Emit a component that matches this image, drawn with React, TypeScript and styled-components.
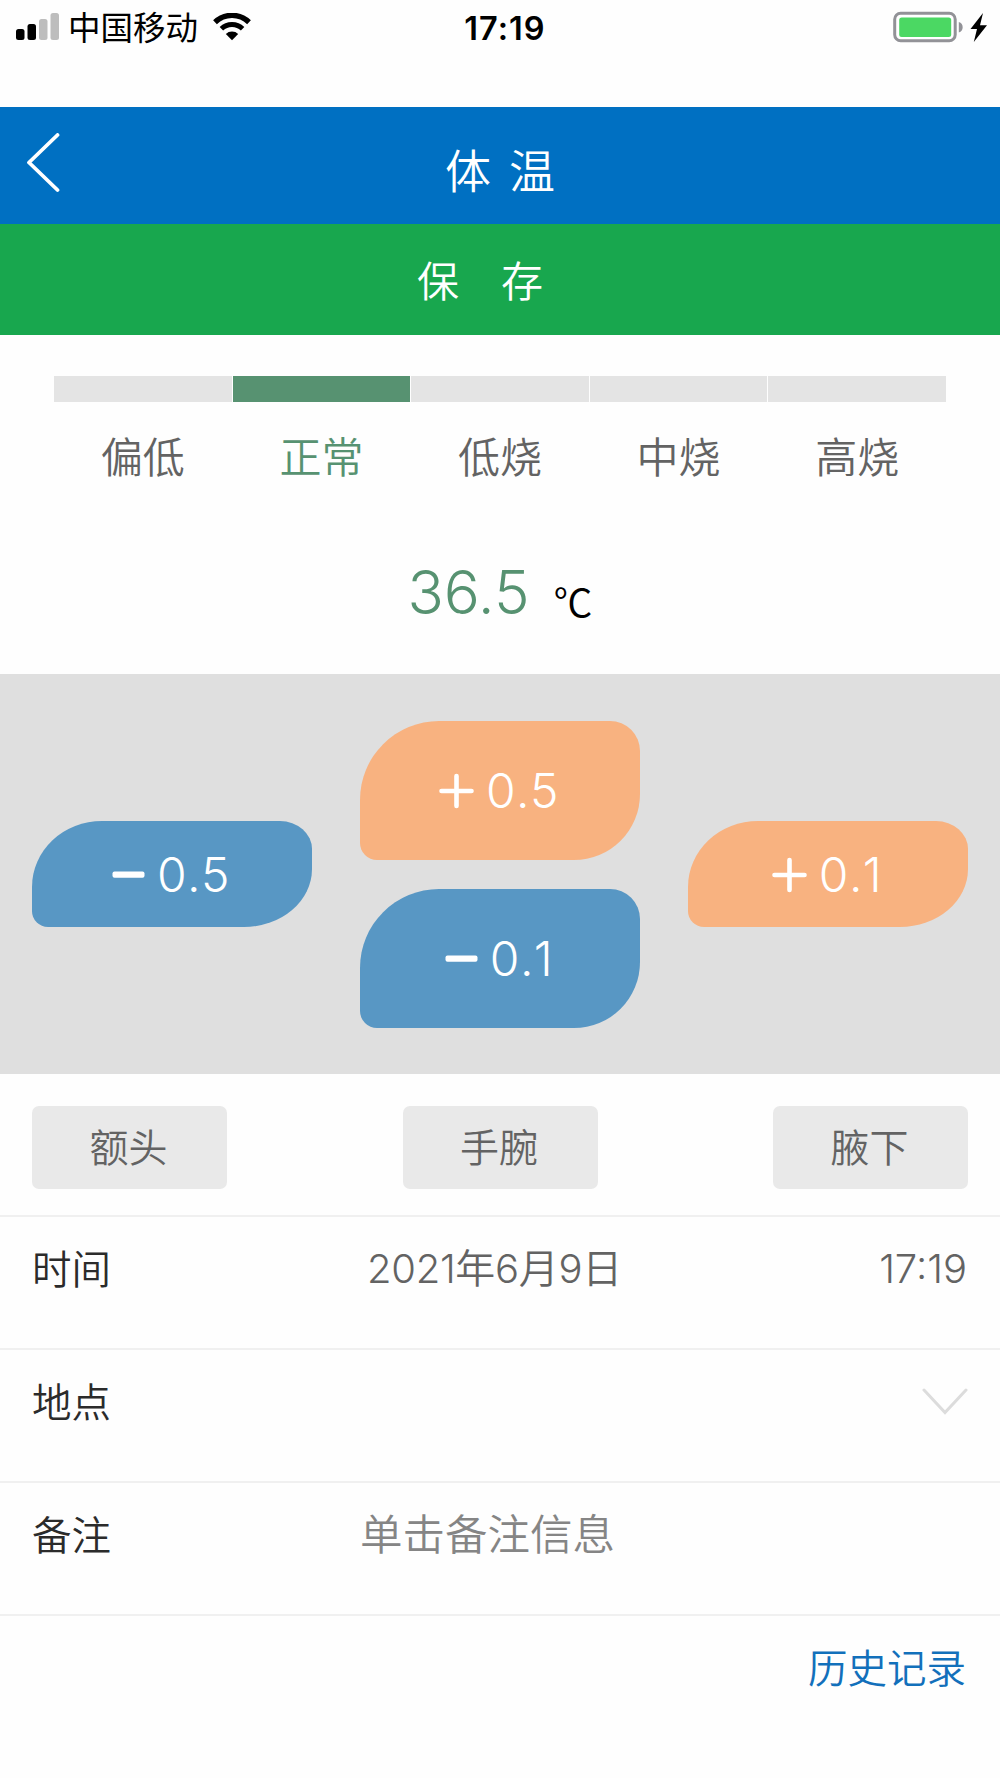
import React, { useState } from "react";
import styled, { createGlobalStyle } from "styled-components";

const GlobalStyle = createGlobalStyle`
  * { box-sizing: border-box; }
  body {
    margin: 0;
    background: #fefefe;
    font-family: Inter, "Noto Sans CJK SC", sans-serif;
    font-weight: 350;
  }
  button { border: 0; padding: 0; font: inherit; cursor: pointer; }
`;

const Screen = styled.main`
  width: 1000px;
  height: 1778px;
  display: flex;
  flex-direction: column;
  overflow: hidden;
  background: #fefefe;
`;

const StatusBar = styled.div`
  height: 107px;
  padding: 0 10px 0 16px;
  display: grid;
  grid-template-columns: 1fr auto 1fr;
  align-items: start;
  color: #000;
`;

const StatusSide = styled.div<{ $end?: boolean }>`
  height: 54px;
  display: flex;
  align-items: center;
  justify-content: ${(p) => (p.$end ? "flex-end" : "flex-start")};
`;

const Carrier = styled.span`
  margin: 0 15px 0 8px;
  padding-top: 4px;
  font-size: 32.5px;
  line-height: 54px;
  font-weight: 400;
`;

const Clock = styled.span`
  padding-left: 4px;
  font-size: 32.5px;
  line-height: 57px;
  font-weight: 600;
  letter-spacing: 1px;
`;

const Header = styled.header`
  height: 117px;
  padding: 0 26px;
  display: grid;
  grid-template-columns: 60px 1fr 60px;
  align-items: center;
  background: #0070c2;
  color: #fff;
`;

const BackButton = styled.button`
  height: 60px;
  margin-bottom: 5px;
  background: none;
  color: #fff;
  text-align: left;
`;

const Title = styled.h1`
  margin: 0;
  padding-top: 11px;
  font-size: 46px;
  line-height: 60px;
  font-weight: 350;
  text-align: center;
  word-spacing: 5px;
`;

const SaveButton = styled.button`
  height: 111px;
  padding: 2px 40px 0 0;
  background: #18a74e;
  color: #fff;
  font-size: 42px;
  line-height: 111px;
  display: flex;
  justify-content: center;
  gap: 42px;
`;

const Scale = styled.section`
  margin: 41px 54px 0 54px;
  display: grid;
  grid-template-columns: repeat(5, 1fr);
  column-gap: 1px;
`;

const Level = styled.div<{ $active: boolean }>`
  color: ${(p) => (p.$active ? "#579271" : "#636363")};
  font-size: 42px;
  line-height: 60px;
  text-align: center;

  &::before {
    content: "";
    display: block;
    height: 26px;
    margin-bottom: 26px;
    background: ${(p) => (p.$active ? "#579271" : "#e4e4e4")};
  }
`;

const Reading = styled.section`
  height: 186px;
  display: flex;
  align-items: baseline;
  justify-content: center;
  padding-top: 64px;
`;

const Value = styled.span`
  color: #579271;
  font-size: 60px;
  line-height: 80px;
  font-weight: 300;
`;

const Unit = styled.span`
  margin-left: 24px;
  position: relative;
  top: 3px;
  color: #000;
  font-family: "Noto Sans CJK SC", sans-serif;
  font-size: 39px;
  line-height: 50px;
`;

const Adjust = styled.section`
  height: 400px;
  padding: 0 32px;
  display: grid;
  grid-template-columns: 280px 280px 280px;
  justify-content: space-between;
  align-items: center;
  background: #dfdfdf;
`;

const Stack = styled.div`
  display: flex;
  flex-direction: column;
  gap: 29px;
`;

const StepButton = styled.button<{ $tone: "warm" | "cool"; $tall?: boolean }>`
  height: ${(p) => (p.$tall ? 139 : 106)}px;
  padding: 1px 2px 0 0;
  border-radius: ${(p) =>
    p.$tall
      ? "79px 30px 66px 17px / 79px 30px 66px 17px"
      : "70px 32px 68px 16px / 66px 28px 58px 16px"};
  background: ${(p) => (p.$tone === "warm" ? "#f8b280" : "#5897c4")};
  color: #fff;
  display: flex;
  align-items: center;
  justify-content: center;
  gap: 12px;
  font-size: 48px;
  font-weight: 300;
  letter-spacing: 0.4px;
  line-height: 60px;
`;

const Sites = styled.section`
  height: 143px;
  padding: 32px 32px 0;
  display: flex;
  justify-content: space-between;
  align-items: flex-start;
  border-bottom: 2px solid #f0f0f0;
`;

const SiteButton = styled.button`
  width: 195px;
  height: 83px;
  padding-right: 2px;
  border-radius: 7px;
  background: #e9e9e9;
  color: #636363;
  font-size: 39px;
  line-height: 84px;
`;

const Row = styled.div`
  height: 133px;
  padding: 22px 33px 0 32px;
  display: grid;
  grid-template-columns: 328px 1fr auto;
  align-items: start;
  border-bottom: 2px solid #f0f0f0;
  color: #636363;
  font-size: 40px;
  line-height: 60px;
`;

const Label = styled.span`
  color: #2b2b2b;
  font-size: 39.5px;
  line-height: 62px;
`;

const DateText = styled.span`
  padding-left: 7px;
  white-space: nowrap;
  letter-spacing: -0.3px;
`;

const Placeholder = styled.span`
  color: #858585;
  font-size: 42.5px;
`;

const History = styled.a`
  align-self: flex-end;
  margin: 23px 34px 0 0;
  color: #1270bb;
  font-size: 39.5px;
  line-height: 60px;
`;

const SignalIcon = () => (
  <svg width="44" height="28" viewBox="0 0 44 28">
    <rect x="0" y="16" width="8.5" height="11" rx="2.5" fill="#000" />
    <rect x="11.5" y="11" width="8.5" height="16" rx="2.5" fill="#000" />
    <rect x="23" y="6" width="8.5" height="21" rx="2.5" fill="#bdbdbd" />
    <rect x="34.5" y="0" width="8.5" height="27" rx="2.5" fill="#bdbdbd" />
  </svg>
);

const WifiIcon = () => (
  <svg width="38" height="28" viewBox="0 0 38 28" fill="none" stroke="#000">
    <path d="M2 9.2 A24.5 24.5 0 0 1 36 9.2" strokeWidth="5.4" />
    <path d="M8.4 15.7 A15.3 15.3 0 0 1 29.6 15.7" strokeWidth="5" />
    <path d="M12.8 21 A9 9 0 0 1 25.2 21 L19 27.2 Z" fill="#000" stroke="none" />
  </svg>
);

const BatteryIcon = () => (
  <svg width="98" height="32" viewBox="0 0 98 32">
    <rect x="2.7" y="2.2" width="60.5" height="27.5" rx="6" fill="#fff" stroke="#929297" strokeWidth="3" />
    <rect x="7.2" y="6.5" width="52" height="19.5" rx="2.5" fill="#4bd863" />
    <path d="M66.8 11 C72 12.2 72 20.3 66.8 21.5 Z" fill="#929297" />
    <path d="M91 2 L78.5 18 H85 L81.8 31 L95 14.2 H88 Z" fill="#000" />
  </svg>
);

const BackIcon = () => (
  <svg width="34" height="60" viewBox="0 0 34 60" fill="none" stroke="#fff" strokeWidth="3.8" strokeLinecap="round" strokeLinejoin="round">
    <path d="M31.5 2 L3 29.5 L31.5 57" />
  </svg>
);

const DownIcon = () => (
  <svg width="46" height="28" viewBox="0 0 46 28" fill="none" stroke="#dcdcdc" strokeWidth="3" strokeLinecap="round">
    <path d="M2 2 L23 24.5 L44 2" />
  </svg>
);

const ChevronSlot = styled.span`
  height: 60px;
  margin-right: -1px;
  display: flex;
  align-items: center;
`;

const PlusIcon = () => (
  <svg width="35" height="36" viewBox="0 0 35 36" stroke="#fff" strokeWidth="4.6" strokeLinecap="round">
    <path d="M2.5 18 H32.5 M17.5 3 V33" />
  </svg>
);

const MinusIcon = () => (
  <svg width="33" height="36" viewBox="0 0 33 36">
    <rect x="0.5" y="14.5" width="32" height="6.3" rx="2" fill="#fff" />
  </svg>
);

const Amount = styled.span`
  font-kerning: none;
`;

const levels = [
  { name: "偏低", below: 36 },
  { name: "正常", below: 37.3 },
  { name: "低烧", below: 38.1 },
  { name: "中烧", below: 39.1 },
  { name: "高烧", below: Infinity },
];

export default function App() {
  const [value, setValue] = useState(36.5);
  const active = levels.findIndex((l) => value < l.below);
  const step = (d: number) => setValue((v) => Math.round((v + d) * 10) / 10);

  return (
    <>
      <GlobalStyle />
      <Screen>
        <StatusBar>
          <StatusSide>
            <SignalIcon />
            <Carrier>中国移动</Carrier>
            <WifiIcon />
          </StatusSide>
          <Clock>17:19</Clock>
          <StatusSide $end>
            <BatteryIcon />
          </StatusSide>
        </StatusBar>
        <Header>
          <BackButton aria-label="返回">
            <BackIcon />
          </BackButton>
          <Title>体 温</Title>
        </Header>
        <SaveButton>
          <span>保</span>
          <span>存</span>
        </SaveButton>
        <Scale>
          {levels.map((l, i) => (
            <Level key={l.name} $active={i === active}>
              {l.name}
            </Level>
          ))}
        </Scale>
        <Reading>
          <Value>{value.toFixed(1)}</Value>
          <Unit>℃</Unit>
        </Reading>
        <Adjust>
          <StepButton $tone="cool" onClick={() => step(-0.5)}>
            <MinusIcon />
            <Amount>0.5</Amount>
          </StepButton>
          <Stack>
            <StepButton $tone="warm" $tall onClick={() => step(0.5)}>
              <PlusIcon />
              <Amount>0.5</Amount>
            </StepButton>
            <StepButton $tone="cool" $tall onClick={() => step(-0.1)}>
              <MinusIcon />
              <Amount>0.1</Amount>
            </StepButton>
          </Stack>
          <StepButton $tone="warm" onClick={() => step(0.1)}>
            <PlusIcon />
            <Amount>0.1</Amount>
          </StepButton>
        </Adjust>
        <Sites>
          <SiteButton>额头</SiteButton>
          <SiteButton>手腕</SiteButton>
          <SiteButton>腋下</SiteButton>
        </Sites>
        <Row>
          <Label>时间</Label>
          <DateText>2021年6月9日</DateText>
          <span>17:19</span>
        </Row>
        <Row>
          <Label>地点</Label>
          <span />
          <ChevronSlot>
            <DownIcon />
          </ChevronSlot>
        </Row>
        <Row>
          <Label>备注</Label>
          <Placeholder>单击备注信息</Placeholder>
        </Row>
        <History>历史记录</History>
      </Screen>
    </>
  );
}
